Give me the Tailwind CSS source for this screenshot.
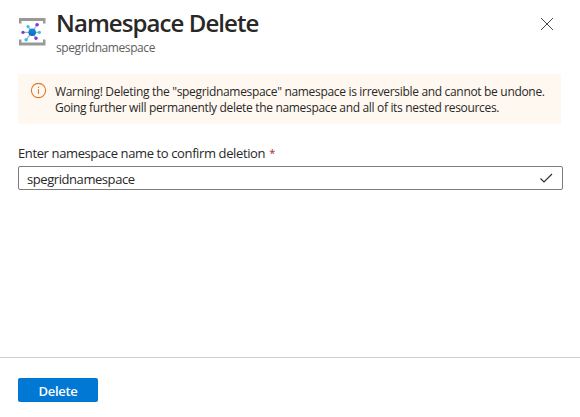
<!DOCTYPE html>
<html lang="en">
<head>
<meta charset="utf-8">
<title>Namespace Delete</title>
<script src="https://cdn.jsdelivr.net/npm/@tailwindcss/browser@4"></script>
</head>
<body class="bg-white">
<main class="flex h-[417px] w-[580px] flex-col overflow-hidden bg-white font-['Open_Sans',sans-serif] text-[#292827]">
  <header class="flex h-[74px] shrink-0 pl-[18px] pr-[26px]">
    <svg class="mt-[17px] h-[29px] w-[28px] shrink-0" viewBox="0 0 28 29" fill="none">
      <defs><linearGradient id="hub" x1="0" y1="0" x2="0" y2="1"><stop stop-color="#168be0"/><stop offset="1" stop-color="#0868c9"/></linearGradient></defs>
      <path d="M1 6.5V1H27.5V6.5H25V4H3.5V6.5ZM1 22.5V28.5H27.5V22.5H25V25.5H3.5V22.5Z" fill="#999"/>
      <path d="M14.2 15.3 10 9.6M14.2 15.3 19 7.7M14.2 15.3H5M14.2 15.3H21.4M14.2 15.3 8 22.6M14.2 15.3 18 21.3" stroke="#a5b1ba" stroke-width="1.2"/>
      <g fill="#32c5dc"><circle cx="10" cy="9.6" r="1.6"/><circle cx="21.4" cy="15.3" r="1.6"/><circle cx="8.1" cy="22.7" r="1.7"/></g>
      <g fill="#773adc"><circle cx="19.1" cy="7.7" r="1.8"/><circle cx="5" cy="15.3" r="1.6"/><circle cx="18" cy="21.3" r="1.7"/></g>
      <circle cx="14.2" cy="15.3" r="3.8" fill="url(#hub)"/>
    </svg>
    <div class="ml-[10px] flex-1 whitespace-nowrap">
      <h1 class="mt-[7px] h-[33px] text-[24px] leading-[32px] font-semibold tracking-[-0.92px]">Namespace Delete</h1>
      <p class="text-[12px] leading-[16px] tracking-[-0.42px] text-[#605e5c]">spegridnamespace</p>
    </div>
    <button class="mt-[17px] flex h-[14px] w-[14px] items-center justify-center" aria-label="Close">
      <svg class="h-[14px] w-[14px]" viewBox="0 0 14 14" fill="none" stroke="#484644" stroke-width="1"><path d="M1 1 13 13M13 1 1 13"/></svg>
    </button>
  </header>
  <section class="ml-[18px] flex h-[50px] w-[543px] shrink-0 bg-[#fff8f1] pl-[12px]">
    <svg class="mt-[8px] h-[17px] w-[17px] shrink-0" viewBox="0 0 17 17" fill="none"><circle cx="8.5" cy="8.5" r="7.1" stroke="#db7a28" stroke-width="1.1"/><path d="M8.5 7.2V12M8.5 4.8V6" stroke="#db7a28" stroke-width="1.1"/></svg>
    <p class="mt-[10px] ml-[8px] text-[12px] leading-[16px] whitespace-nowrap"><span class="block tracking-[-0.32px]">Warning! Deleting the "spegridnamespace" namespace is irreversible and cannot be undone.</span><span class="block tracking-[-0.33px]">Going further will permanently delete the namespace and all of its nested resources.</span></p>
  </section>
  <label for="name" class="mt-[20px] ml-[18px] flex h-[18px] shrink-0 text-[13px] leading-[18px] whitespace-nowrap"><span class="tracking-[-0.38px]">Enter namespace name to confirm deletion</span><span class="ml-[4px] text-[11px] text-[#a4262c]">*</span></label>
  <div class="mt-[4px] ml-[18px] flex h-[24px] w-[545px] shrink-0 items-center rounded-[2px] border border-[#807e7c] pr-[9px] pl-[8px]">
    <div id="name" class="flex-1 pt-[2px] text-[13px] leading-[18px] whitespace-nowrap"><span class="tracking-[-0.43px]">spegridnamespace</span></div>
    <svg class="h-[12px] w-[14px]" viewBox="0 0 14 12" fill="none" stroke="#323130" stroke-width="1.2"><path d="M1.5 6.5 5 10 13 2"/></svg>
  </div>
  <footer class="mt-auto flex h-[60px] shrink-0 border-t border-[#d2d0ce] pl-[18px]">
    <button class="mt-[20px] flex h-[24px] w-[80px] items-center justify-center rounded-[2px] bg-[#0078d4] pt-[2px] text-[13px] leading-[18px] font-semibold text-white"><span class="tracking-[-0.3px]">Delete</span></button>
  </footer>
</main>
</body>
</html>
